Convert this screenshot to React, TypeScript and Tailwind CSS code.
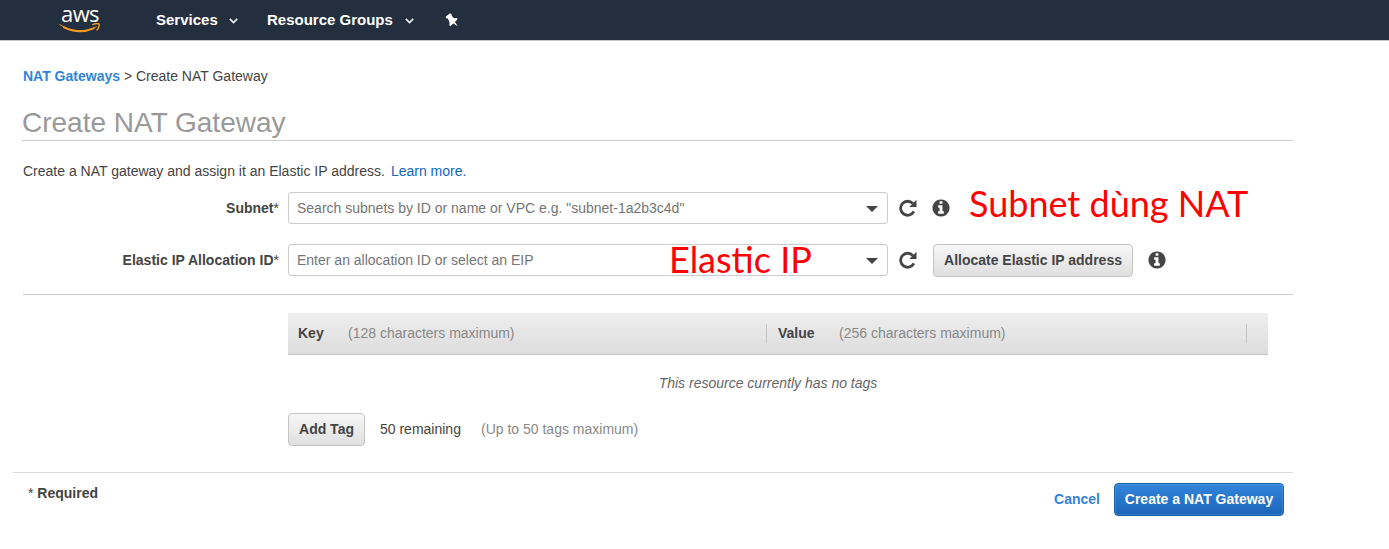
import React from "react";

function Chevron() {
  return (
    <svg width="9" height="6" viewBox="0 0 9 6" className="relative top-px block" fill="none" stroke="#eee" strokeWidth="1.7">
      <path d="M0.8 0.9 L4.5 4.5 L8.2 0.9" />
    </svg>
  );
}

function Refresh() {
  return (
    <svg width="18" height="18" viewBox="0 0 18 18" className="block shrink-0">
      <path d="M13.9 4.6 A7 7 0 1 0 14.9 12.4" fill="none" stroke="#444" strokeWidth="2.8" />
      <path d="M17.5 0.8V7.9H10.3Z" fill="#444" />
    </svg>
  );
}

function Info() {
  return (
    <svg width="20" height="20" viewBox="0 0 1792 1792" className="block shrink-0" fill="#444">
      <path d="M1152 1376v-160q0-14-9-23t-23-9h-96v-512q0-14-9-23t-23-9h-320q-14 0-23 9t-9 23v160q0 14 9 23t23 9h96v320h-96q-14 0-23 9t-9 23v160q0 14 9 23t23 9h448q14 0 23-9t9-23zm-128-896v-160q0-14-9-23t-23-9h-192q-14 0-23 9t-9 23v160q0 14 9 23t23 9h192q14 0 23-9t9-23zm640 416q0 209-103 385.5t-279.5 279.5-385.5 103-385.5-103-279.5-279.5-103-385.5 103-385.5 279.5-279.5 385.5-103 385.5 103 279.5 279.5 103 385.5z" />
    </svg>
  );
}

function Pin() {
  return (
    <svg width="14" height="14" viewBox="0 0 14 14" className="block" fill="#fff">
      <path d="M0.6 3.8 L5 0.2 L6.8 1.4 L6.6 2.8 L9 5.3 L11.8 5 L12.6 6.2 L9.9 8.9 L12.8 13.3 L8.4 10.4 L5.6 13 L4.3 12.2 L4.6 9.4 L2.8 5.4 L1.4 5.4 Z" />
    </svg>
  );
}

function Select({ placeholder }: { placeholder: string }) {
  return (
    <div className="flex h-8 w-[600px] shrink-0 items-center justify-between rounded-[3px] border border-[#ccc] bg-white pl-2 pr-[9px] text-[#757575]">
      <span>{placeholder}</span>
      <svg width="12" height="6" viewBox="0 0 12 6" className="relative top-px block" fill="#444">
        <path d="M0 0H12L6 6Z" />
      </svg>
    </div>
  );
}

function GreyButton({ children, className }: { children: React.ReactNode; className: string }) {
  return (
    <button
      className={
        "flex h-[33px] shrink-0 items-center justify-center whitespace-nowrap rounded-[4px] border border-[#c4c4c4] bg-linear-to-b from-[#f7f7f7] to-[#dfdfdf] font-bold text-[#444] " +
        className
      }
    >
      {children}
    </button>
  );
}

export default function App() {
  return (
    <div className="h-[549px] w-[1389px] overflow-hidden bg-white font-['Liberation_Sans',Arial,sans-serif] text-[14px] leading-4 text-[#444]">
      <header className="flex h-[41px] items-center border-b border-[#c3c5c8] bg-[#232f3e] pl-[59px] text-[15px] font-bold text-white">
        <div className="flex h-10 w-[42px] flex-col items-center pt-[3px]">
          <span className="h-5 font-['Open_Sans',sans-serif] text-[22px] font-medium leading-[21px] tracking-[-0.6px]">
            aws
          </span>
          <svg width="42" height="10" viewBox="0 0 42 10" className="block" fill="none" stroke="#f7981f" strokeLinecap="round">
            <path d="M0.8 1.6 C12 9.2 26 9.6 37.2 3.9" strokeWidth="1" />
            <path d="M5 4.4 C15 9.3 26 9 34.5 5.3" strokeWidth="2" />
            <path d="M33.8 1.6 C36.5 0.5 39.4 0.5 40.1 1.1 C40.7 2 39.6 5.2 38 7" strokeWidth="1.4" />
          </svg>
        </div>
        <div className="ml-[55px] flex items-center">
          <span className="w-[73px] whitespace-nowrap">Services</span>
          <Chevron />
        </div>
        <div className="ml-[29px] flex items-center">
          <span className="w-[138px] whitespace-nowrap">Resource Groups</span>
          <Chevron />
        </div>
        <div className="ml-[31px]">
          <Pin />
        </div>
      </header>

      <main>
        <div className="ml-[23px] w-[1270px]">
          <nav className="pt-[27px]">
            <span className="font-bold text-[#3184d8]">NAT Gateways</span>
            <span> &gt; Create NAT Gateway</span>
          </nav>
          <h1 className="-ml-px mt-[22px] h-[35px] border-b border-[#ccc] pt-px text-[28px] leading-[32px] text-[#999]">
            Create NAT Gateway
          </h1>
          <p className="mt-[22px]">
            Create a NAT gateway and assign it an Elastic IP address.
            <a className="ml-[6px] text-[#1166bb]">Learn more.</a>
          </p>

          <div className="mt-[13px] flex h-8 items-center">
            <label className="mr-[9px] w-[256px] text-right">
              <b>Subnet</b>*
            </label>
            <Select placeholder={'Search subnets by ID or name or VPC e.g. "subnet-1a2b3c4d"'} />
            <div className="ml-[11px]">
              <Refresh />
            </div>
            <div className="ml-[14px]">
              <Info />
            </div>
            <span className="ml-[18px] h-[47px] whitespace-nowrap font-['Lato',sans-serif] text-[36px] leading-[36px] text-[#f00]">
              Subnet dùng NAT
            </span>
          </div>

          <div className="relative mt-5 flex h-8 items-center">
            <label className="mr-[9px] w-[256px] text-right">
              <b>Elastic IP Allocation ID</b>*
            </label>
            <Select placeholder="Enter an allocation ID or select an EIP" />
            <div className="ml-[11px]">
              <Refresh />
            </div>
            <GreyButton className="ml-4 w-[200px] pb-px">Allocate Elastic IP address</GreyButton>
            <div className="ml-[14px]">
              <Info />
            </div>
            <span className="absolute left-[646px] top-[-3px] whitespace-nowrap font-['Lato',sans-serif] text-[36px] leading-[36px] text-[#f00]">
              Elastic IP
            </span>
          </div>

          <hr className="mt-[18px] border-[#ccc]" />

          <section className="ml-[265px] w-[980px]">
            <div className="mt-[18px] flex h-[42px] items-center border-b border-[#c4c4c4] bg-linear-to-b from-[#eee] to-[#ddd]">
              <div className="flex w-[478px] pb-px pl-[10px]">
                <b className="w-[50px]">Key</b>
                <span className="text-[#888]">(128 characters maximum)</span>
              </div>
              <div className="flex h-[19px] w-[481px] items-center border-l border-r border-[#c4c4c4] pb-[2px] pl-[11px]">
                <b className="w-[61px]">Value</b>
                <span className="text-[#888]">(256 characters maximum)</span>
              </div>
            </div>
            <p className="mt-5 pr-5 text-center italic text-[#666]">This resource currently has no tags</p>
            <div className="mt-[22px] flex items-center">
              <GreyButton className="w-[77px] pb-[2px]">Add Tag</GreyButton>
              <span className="ml-[15px] w-[101px] pb-[2px]">50 remaining</span>
              <span className="pb-[2px] text-[#888]">(Up to 50 tags maximum)</span>
            </div>
          </section>
        </div>

        <footer className="ml-[13px] mt-[26px] flex w-[1280px] justify-between border-t border-[#ddd] pl-[15px] pr-[9px]">
          <div className="pt-[12px]">
            * <b>Required</b>
          </div>
          <div className="flex items-center pt-[10px]">
            <a className="mr-[14px] pb-[2px] font-bold text-[#3184d8]">Cancel</a>
            <button className="h-[33px] w-[170px] whitespace-nowrap rounded-[4px] border border-[#1b62ab] bg-linear-to-b from-[#3286dc] to-[#1b65b9] pb-[2px] font-bold text-white shadow-[inset_0_0_0_1px_rgba(255,255,255,0.12)]">
              Create a NAT Gateway
            </button>
          </div>
        </footer>
      </main>
    </div>
  );
}
